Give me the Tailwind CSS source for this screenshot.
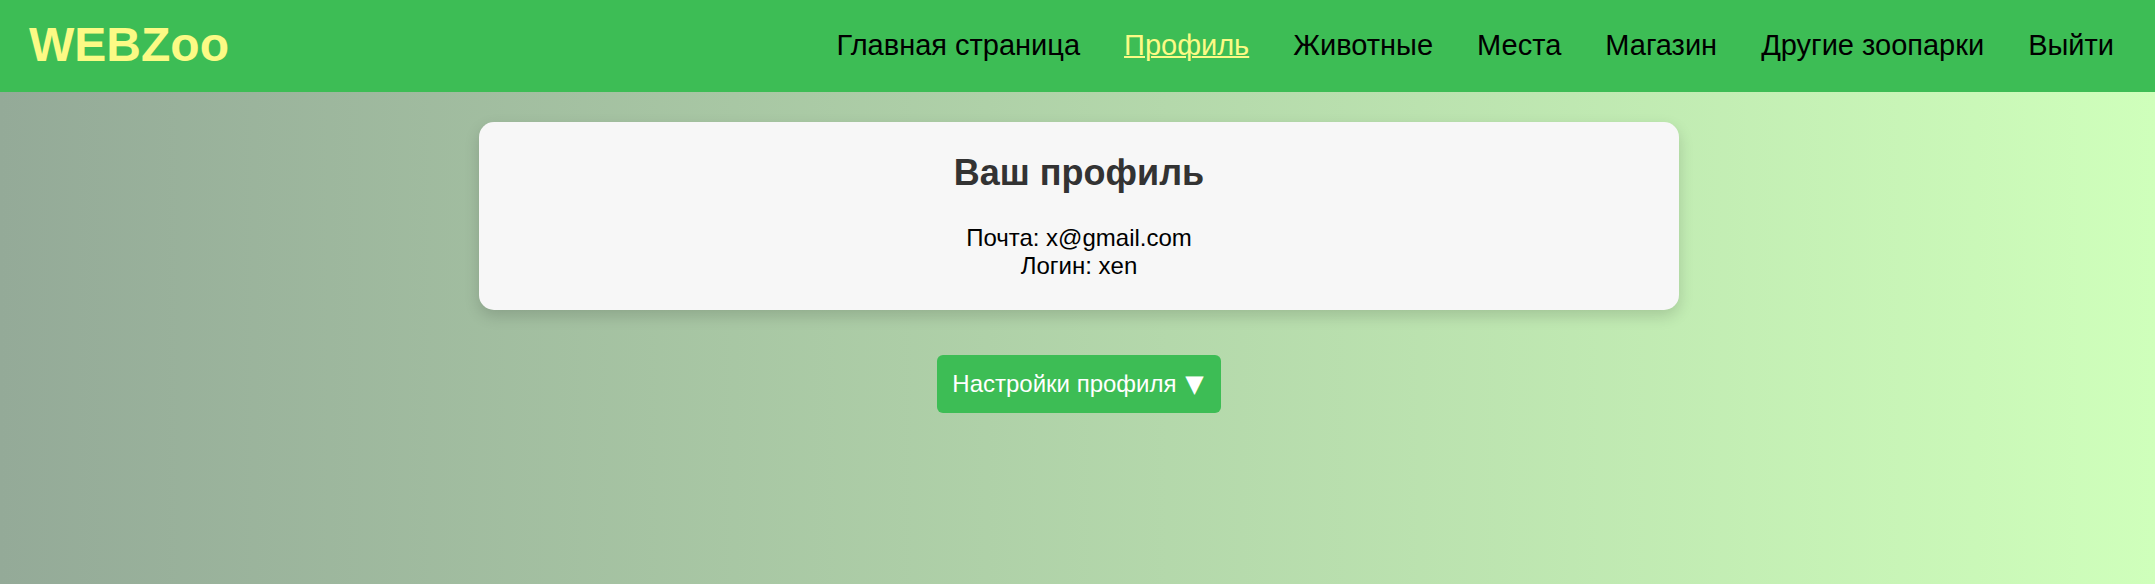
<!DOCTYPE html>
<html lang="ru">
<head>
<meta charset="utf-8">
<title>WEBZoo</title>
<script src="https://cdn.jsdelivr.net/npm/@tailwindcss/browser@4"></script>
</head>
<body class="min-h-screen bg-linear-to-r/srgb from-[#94aa98] to-[#cfffbb] font-['Liberation_Sans',Arial,sans-serif] text-black">
<header class="flex items-center justify-between bg-[#3dbd55] pt-[17px] pr-[41px] pb-[19px] pl-[29px]">
  <a href="#" class="text-5xl leading-[56px] font-bold text-[#fbfa85]">WEBZoo</a>
  <nav class="flex gap-11 text-[29px] leading-8">
    <a href="#">Главная страница</a>
    <a href="#" aria-current="page" class="text-[#fbfa85] underline decoration-2">Профиль</a>
    <a href="#">Животные</a>
    <a href="#">Места</a>
    <a href="#">Магазин</a>
    <a href="#">Другие зоопарки</a>
    <a href="#">Выйти</a>
  </nav>
</header>
<main class="flex flex-col items-center pt-[30px] pr-6 pl-[27px]">
  <section class="w-full max-w-[1200px] rounded-[15px] bg-[#f7f7f7] p-[30px] text-center shadow-[0_6px_15px_rgba(0,0,0,0.15)]">
    <h1 class="text-4xl leading-[42px] font-bold text-[#333333]">Ваш профиль</h1>
    <div class="mt-[30px] text-2xl leading-7">
      <p>Почта: x@gmail.com</p>
      <p>Логин: xen</p>
    </div>
  </section>
  <button type="button" class="mt-[45px] rounded-md bg-[#3dbd55] p-[15px] text-2xl leading-7 text-white">Настройки профиля <span class="px-[2px] font-['DejaVu_Sans',sans-serif] leading-none">▼</span></button>
</main>
</body>
</html>
